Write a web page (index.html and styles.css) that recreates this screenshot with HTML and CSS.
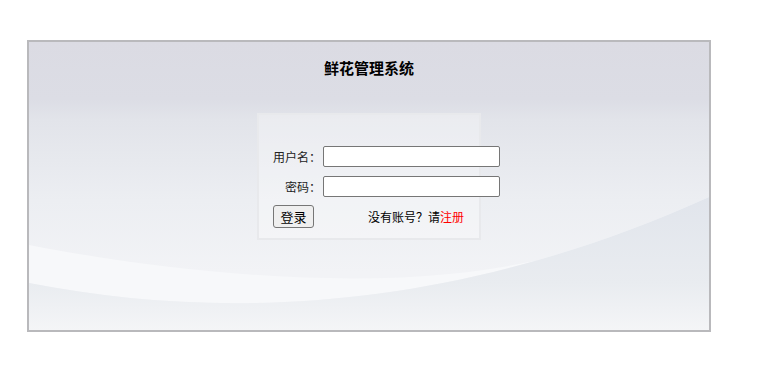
FILE: index.html
```html
<!DOCTYPE html>
<html>
<head>
    <title>鲜花管理系统</title>
    <link rel="stylesheet" href="styles.css">
</head>
<body>
    <div class="login-box">
        <svg class="bg" viewBox="0 0 680 288" preserveAspectRatio="none">
            <defs>
                <linearGradient id="sky" x1="0" y1="0" x2="0" y2="1">
                    <stop offset="0" stop-color="#dbdbe3"/>
                    <stop offset="0.2" stop-color="#dcdde5"/>
                    <stop offset="0.27" stop-color="#e2e4ea"/>
                    <stop offset="0.55" stop-color="#eceef2"/>
                    <stop offset="0.8" stop-color="#f2f3f6"/>
                </linearGradient>
                <linearGradient id="ground" x1="0" y1="0" x2="0" y2="1">
                    <stop offset="0" stop-color="#e1e5ec"/>
                    <stop offset="0.65" stop-color="#e9ecf0"/>
                    <stop offset="1" stop-color="#f4f5f7"/>
                </linearGradient>
            </defs>
            <rect x="0" y="0" width="680" height="288" fill="url(#sky)"/>
            <path d="M0,203 C130,228 290,245 420,232 C520,222 610,195 680,160 L680,155 C430,268 200,280 0,241 Z" fill="#f7f8fa"/>
            <path d="M0,241 C200,280 430,268 680,155 L680,288 L0,288 Z" fill="url(#ground)"/>
        </svg>
        <div class="content">
            <h1 class="title">鲜花管理系统</h1>
            <div class="panel">
                <div class="row">
                    <label class="label">用户名：</label>
                    <input type="text" class="field">
                </div>
                <div class="row">
                    <label class="label">密码：</label>
                    <input type="password" class="field">
                </div>
                <div class="row">
                    <button class="btn">登录</button>
                    <span class="tip">没有账号？请<a href="register.html">注册</a></span>
                </div>
            </div>
        </div>
    </div>
</body>
</html>
```
FILE: styles.css
```css
body {
    font-family: "Noto Sans CJK SC", "Liberation Sans", sans-serif;
    background-color: #ffffff;
    margin: 0;
    padding: 0;
    color: #222;
}
.login-box {
    position: relative;
    box-sizing: border-box;
    width: 684px;
    height: 292px;
    margin: 40px 0 0 27px;
    border: 2px solid #b9b9bc;
    overflow: hidden;
}
.bg {
    position: absolute;
    left: 0;
    top: 0;
    width: 680px;
    height: 288px;
    display: block;
}
.content {
    position: relative;
}
.title {
    margin: 16px 0 0;
    font-size: 15px;
    line-height: 20px;
    font-weight: bold;
    text-align: center;
    color: #000;
}
.panel {
    box-sizing: border-box;
    width: 224px;
    height: 127px;
    margin: 35px auto 0;
    padding: 31px 0 0 14px;
    border: 2px solid #e8e9ec;
    background-color: rgba(255, 255, 255, 0.3);
    overflow: visible;
}
.row {
    display: flex;
    align-items: center;
    height: 21px;
    margin-bottom: 9px;
    line-height: 21px;
}
.row:last-child {
    height: 23px;
    margin-bottom: 0;
    margin-top: -1px;
}
.label {
    flex-shrink: 0;
    width: 48px;
    text-align: right;
    font-size: 12px;
    white-space: nowrap;
    color: #222;
}
.field {
    box-sizing: border-box;
    flex-shrink: 0;
    width: 177px;
    height: 21px;
    margin: 0 0 0 2px;
    border: 1px solid #767676;
    border-radius: 2px;
    background: #fff;
    padding: 1px 2px;
}
.btn {
    box-sizing: border-box;
    flex-shrink: 0;
    width: 41px;
    height: 23px;
    padding: 0;
    border: 1px solid #767676;
    border-radius: 3px;
    background-color: #efefef;
    font-family: "Noto Sans CJK SC", sans-serif;
    font-size: 13px;
    line-height: 21px;
    color: #000;
}
.tip {
    flex-shrink: 0;
    margin-left: 54px;
    font-size: 12px;
    color: #000;
    white-space: nowrap;
}
.tip a {
    color: #ff0000;
    text-decoration: none;
}
```
